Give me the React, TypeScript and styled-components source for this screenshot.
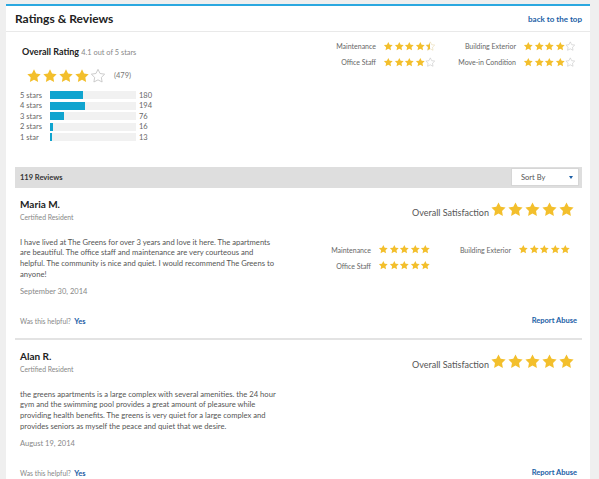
import React, { useId } from "react";
import styled, { createGlobalStyle } from "styled-components";

// star colours
const GOLD = "#f3bf2c";
const BLUE = "#1b5ea6";

type Fill = "full" | "half" | "empty";

const STAR_PATH =
  "M12 2l3.09 6.26L22 9.27l-5 4.87 1.18 6.88L12 17.77l-6.18 3.25L7 14.14 2 9.27l6.91-1.01L12 2z";

function Star({ size, fill }: { size: number; fill: Fill }) {
  const id = useId();
  if (fill === "empty") {
    return (
      <svg width={size} height={size} viewBox="0 0 24 24">
        <path d={STAR_PATH} fill="none" stroke="#c4c4c4" strokeWidth={1.3} />
      </svg>
    );
  }
  if (fill === "half") {
    return (
      <svg width={size} height={size} viewBox="0 0 24 24">
        <defs>
          <linearGradient id={id}>
            <stop offset="50%" stopColor={GOLD} />
            <stop offset="50%" stopColor="#fff" />
          </linearGradient>
        </defs>
        <path d={STAR_PATH} fill={`url(#${id})`} stroke="#d9c27a" strokeWidth={0.8} />
      </svg>
    );
  }
  return (
    <svg width={size} height={size} viewBox="0 0 24 24">
      <path d={STAR_PATH} fill={GOLD} />
    </svg>
  );
}

function Stars({ value, size }: { value: number; size: number }) {
  const list: Fill[] = [0, 1, 2, 3, 4].map((i) =>
    value >= i + 1 ? "full" : value >= i + 0.5 ? "half" : "empty"
  );
  return (
    <StarRow>
      {list.map((f, i) => (
        <Star key={i} size={size} fill={f} />
      ))}
    </StarRow>
  );
}

const GlobalStyle = createGlobalStyle`
  html, body { margin: 0; padding: 0; background: #efefef; }
  body { font-family: Lato, "Open Sans", Arial, sans-serif; color: #555; }
`;

const Page = styled.div`
  box-sizing: border-box;
  height: 479px;
  padding: 4px 9px 0 6px;
  overflow: hidden;
`;

const Panel = styled.div`
  background: #fff;
  border-top: 2px solid #2ba8e0;
  height: 100%;
`;

const Header = styled.div`
  display: flex;
  align-items: center;
  justify-content: space-between;
  height: 25px;
  padding: 0 8px 0 9px;
  border-bottom: 1px solid #e9e9e9;
`;

const Title = styled.h2`
  margin: 0;
  font-size: 12px;
  font-weight: 700;
  color: #222;
`;

const Link = styled.a<{ $size?: number }>`
  font-size: ${(p) => p.$size ?? 8}px;
  font-weight: 700;
  color: ${BLUE};
  text-decoration: none;
`;

const Summary = styled.div`
  display: flex;
  align-items: flex-start;
  justify-content: space-between;
  padding: 6px 6px 0 14px;
`;

const OverallCol = styled.div`
  padding-top: 8px;
`;

const OverallHead = styled.div`
  margin-left: 2px;
  line-height: 12px;
  font-size: 9px;
  font-weight: 700;
  color: #222;
  span {
    font-size: 7.4px;
    font-weight: 400;
    color: #888;
  }
`;

const BigStarsRow = styled.div`
  display: flex;
  align-items: center;
  gap: 8px;
  margin: 8px 0 0 6px;
  height: 17px;
  font-size: 7.5px;
  color: #777;
`;

const StarRow = styled.div`
  display: flex;
  align-items: center;
`;

const Bars = styled.div`
  margin-top: 6px;
`;

const BarRow = styled.div`
  display: grid;
  grid-template-columns: 27px 86px auto;
  column-gap: 3px;
  align-items: center;
  height: 10.5px;
  font-size: 7.5px;
  color: #666;
`;

const Track = styled.div`
  height: 8px;
  background: #f1f1f1;
`;

const Fill = styled.div`
  height: 100%;
  background: #10a4cf;
`;

const SubGrid = styled.div<{ $right: number }>`
  display: grid;
  grid-template-columns: auto 53px 73px 53px;
  grid-auto-rows: 16px;
  align-items: center;
  column-gap: 7px;
  margin-right: ${(p) => p.$right}px;
  font-size: 7px;
  color: #666;
`;

const SubLabel = styled.span`
  text-align: right;
  white-space: nowrap;
`;

const Reviews = styled.div`
  margin: 24px 8px 0 9px;
`;

const ReviewsBar = styled.div`
  display: flex;
  align-items: center;
  justify-content: space-between;
  height: 21px;
  padding: 0 3px 0 5px;
  background: #dedede;
  font-size: 7.5px;
  font-weight: 700;
  color: #333;
`;

const SortBox = styled.div`
  box-sizing: border-box;
  display: flex;
  align-items: center;
  justify-content: space-between;
  width: 68px;
  height: 18px;
  padding: 0 5px 0 9px;
  background: #fff;
  border: 1px solid #d6d6d6;
  font-size: 7.5px;
  font-weight: 400;
  color: #555;
`;

const Caret = styled.span`
  width: 0;
  height: 0;
  border-left: 2.5px solid transparent;
  border-right: 2.5px solid transparent;
  border-top: 3.5px solid ${BLUE};
`;

const Review = styled.div`
  display: grid;
  grid-template-columns: 260px 1fr;
  padding: 9px 0 10px 5px;
  border-bottom: 2px solid #e3e3e3;
`;

const Name = styled.div`
  line-height: 14px;
  font-size: 10px;
  font-weight: 700;
  color: #222;
`;

const Muted = styled.div`
  line-height: 12px;
  font-size: 6.8px;
  color: #888;
`;

const Body = styled.p`
  margin: 14px 0 0;
  line-height: 10.8px;
  font-size: 7.65px;
  color: #555;
`;

const DateLine = styled.div`
  margin-top: 6px;
  line-height: 12px;
  font-size: 7.5px;
  color: #888;
`;

const Right = styled.div`
  display: flex;
  flex-direction: column;
  align-items: flex-end;
  padding-top: 4px;
`;

const Satisfaction = styled.div`
  display: flex;
  align-items: flex-end;
  gap: 1px;
  margin-right: 7px;
  font-size: 9px;
  color: #555;
`;

const Footer = styled.div`
  grid-column: 1 / -1;
  display: flex;
  justify-content: space-between;
  align-items: center;
  margin-top: 17px;
  line-height: 12px;
  font-size: 6.8px;
  color: #888;
`;

const counts = [
  { label: "5 stars", n: 180, w: 33 },
  { label: "4 stars", n: 194, w: 35 },
  { label: "3 stars", n: 76, w: 14 },
  { label: "2 stars", n: 16, w: 3 },
  { label: "1 star", n: 13, w: 2 },
];

type Item = { label: string; value: number };

const summaryItems: Item[] = [
  { label: "Maintenance", value: 4.5 },
  { label: "Building Exterior", value: 4 },
  { label: "Office Staff", value: 4 },
  { label: "Move-in Condition", value: 4 },
];

type ReviewData = {
  name: string;
  text: string;
  date: string;
  items: Item[];
};

const reviews: ReviewData[] = [
  {
    name: "Maria M.",
    text:
      "I have lived at The Greens for over 3 years and love it here. The apartments are beautiful. The office staff and maintenance are very courteous and helpful. The community is nice and quiet. I would recommend The Greens to anyone!",
    date: "September 30, 2014",
    items: [
      { label: "Maintenance", value: 5 },
      { label: "Building Exterior", value: 5 },
      { label: "Office Staff", value: 5 },
    ],
  },
  {
    name: "Alan R.",
    text:
      "the greens apartments is a large complex with several amenities. the 24 hour gym and the swimming pool provides a great amount of pleasure while providing health benefits. The greens is very quiet for a large complex and provides seniors as myself the peace and quiet that we desire.",
    date: "August 19, 2014",
    items: [],
  },
];

function SubRatings({ items, right, top }: { items: Item[]; right: number; top?: number }) {
  return (
    <SubGrid $right={right} style={{ marginTop: top ?? 0 }}>
      {items.map((it) => (
        <React.Fragment key={it.label}>
          <SubLabel>{it.label}</SubLabel>
          <Stars value={it.value} size={10.6} />
        </React.Fragment>
      ))}
    </SubGrid>
  );
}

export default function App() {
  return (
    <>
      <GlobalStyle />
      <Page>
        <Panel>
          <Header>
            <Title>Ratings &amp; Reviews</Title>
            <Link>back to the top</Link>
          </Header>

          <Summary>
            <OverallCol>
              <OverallHead>
                Overall Rating <span>4.1 out of 5 stars</span>
              </OverallHead>
              <BigStarsRow>
                <Stars value={4} size={16} />
                (479)
              </BigStarsRow>
              <Bars>
                {counts.map((c) => (
                  <BarRow key={c.label}>
                    {c.label}
                    <Track>
                      <Fill style={{ width: c.w }} />
                    </Track>
                    {c.n}
                  </BarRow>
                ))}
              </Bars>
            </OverallCol>
            <SubRatings items={summaryItems} right={8} />
          </Summary>

          <Reviews>
            <ReviewsBar>
              119 Reviews
              <SortBox>
                Sort By <Caret />
              </SortBox>
            </ReviewsBar>

            {reviews.map((r) => (
              <Review key={r.name}>
                <div>
                  <Name>{r.name}</Name>
                  <Muted>Certified Resident</Muted>
                  <Body>{r.text}</Body>
                  <DateLine>{r.date}</DateLine>
                </div>
                <Right>
                  <Satisfaction>
                    Overall Satisfaction
                    <Stars value={5} size={17} />
                  </Satisfaction>
                  {r.items.length > 0 && (
                    <SubRatings items={r.items} right={11} top={24} />
                  )}
                </Right>
                <Footer>
                  <span>
                    Was this helpful?&nbsp; <Link $size={7.5}>Yes</Link>
                  </span>
                  <Link $size={7.5} style={{ marginRight: 5 }}>
                    Report Abuse
                  </Link>
                </Footer>
              </Review>
            ))}
          </Reviews>
        </Panel>
      </Page>
    </>
  );
}
